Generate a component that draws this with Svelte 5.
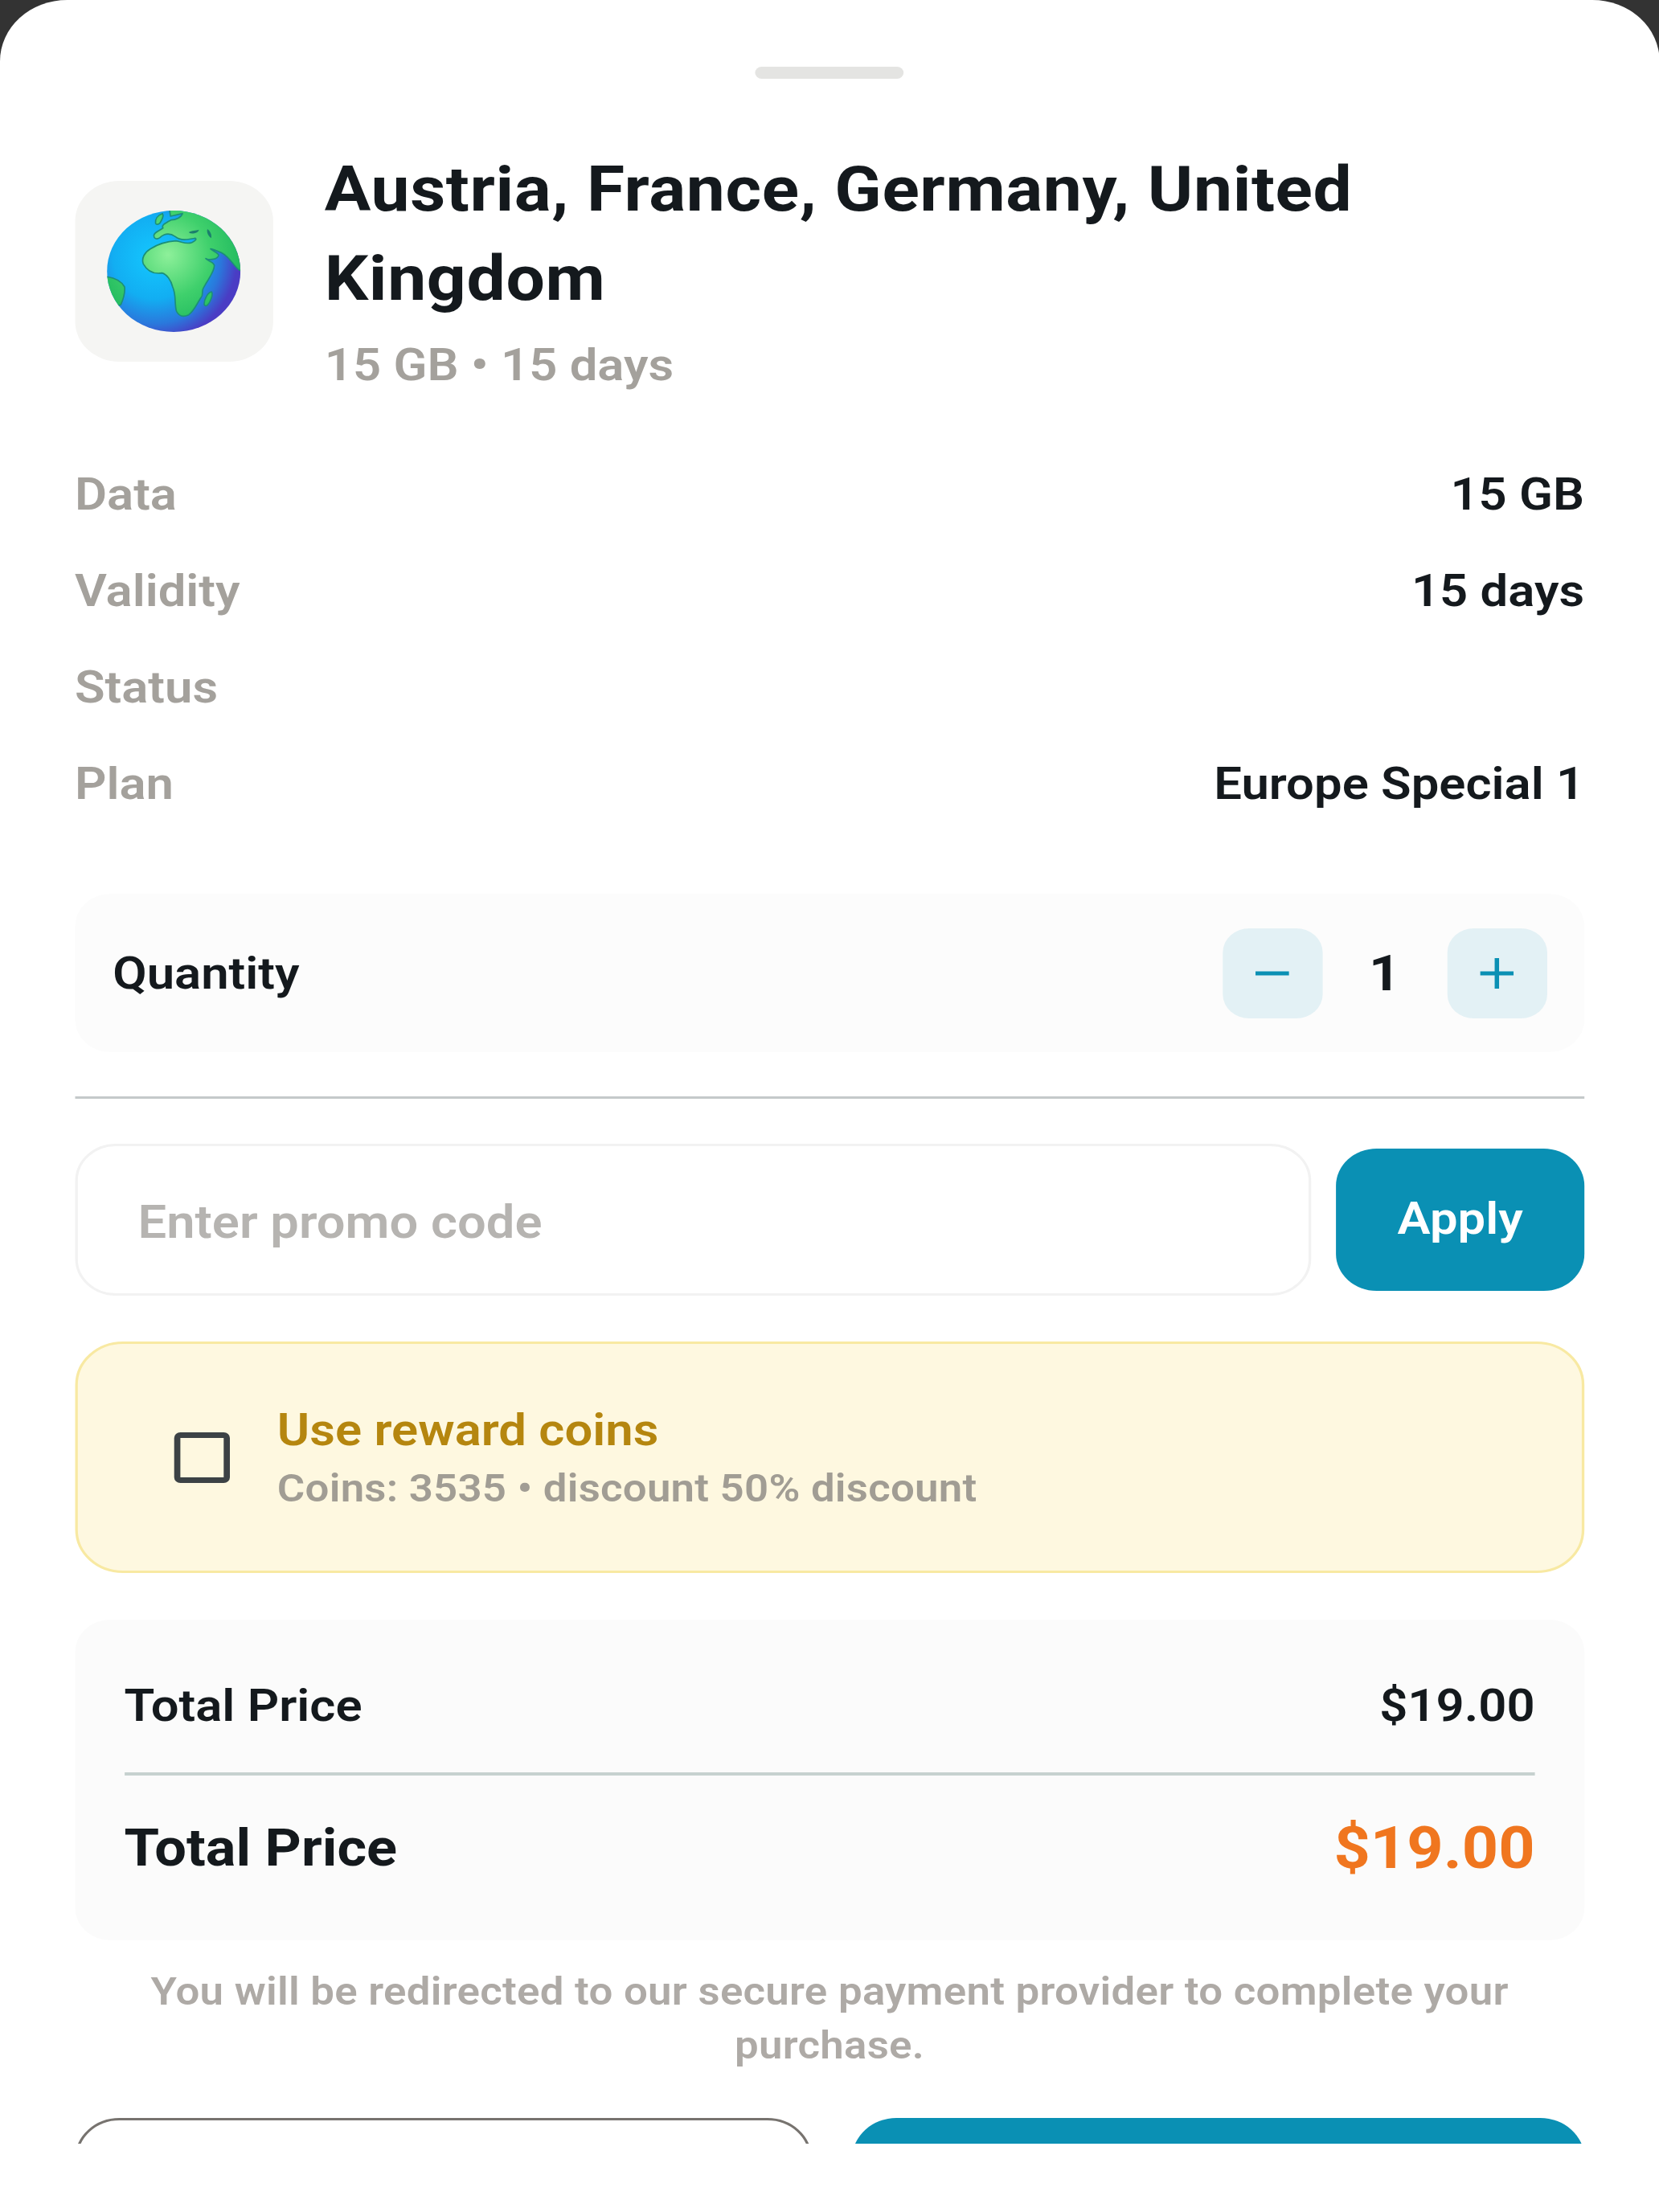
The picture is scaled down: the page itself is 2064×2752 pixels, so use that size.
<script>
  const rows = [
    { label: 'Data', value: '15 GB' },
    { label: 'Validity', value: '15 days' },
    { label: 'Status', value: '' },
    { label: 'Plan', value: 'Europe Special 1' }
  ];
  let quantity = $state(1);
  let useCoins = $state(false);
</script>

<div class="screen">
  <div class="sheet">
    <div class="handle"></div>

    <header class="head">
      <div class="flag">
        <svg class="globe" viewBox="222 215 500 453" preserveAspectRatio="none" aria-hidden="true">
          <defs>
            <radialGradient id="sea" gradientUnits="userSpaceOnUse" cx="400" cy="390" r="310">
              <stop offset="0" stop-color="#14c8ff" />
              <stop offset="0.5" stop-color="#12aef2" />
              <stop offset="0.8" stop-color="#2a78dc" />
              <stop offset="1" stop-color="#4a3cc4" />
            </radialGradient>
            <radialGradient id="land" gradientUnits="userSpaceOnUse" cx="450" cy="380" r="290">
              <stop offset="0" stop-color="#8ef09a" />
              <stop offset="0.55" stop-color="#3fd06c" />
              <stop offset="1" stop-color="#1fb85e" />
            </radialGradient>
            <clipPath id="ball"><ellipse cx="472" cy="441.500" rx="250" ry="226.500" /></clipPath>
          </defs>
          <ellipse cx="472" cy="441.500" rx="250" ry="226.500" fill="url(#sea)" />
          <g clip-path="url(#ball)" fill="url(#land)" stroke="#1c8f78" stroke-width="5" stroke-linejoin="round">
            <path d="M455 205 L740 205 L740 445 L716 436 C695 420 682 388 650 372 C636 366 622 360 610 358 C622 368 640 374 640 382 C636 396 610 402 592 394 C604 406 622 406 624 420 C624 446 600 470 582 506 C576 520 584 530 574 540 C560 560 548 590 528 604 C510 612 492 612 482 590 C474 560 482 530 468 500 C462 476 446 452 428 448 C402 452 376 446 358 414 C350 392 364 370 384 358 C410 342 440 330 480 328 C505 332 520 342 540 334 C552 328 560 322 552 318 C530 322 500 330 478 312 C460 300 440 298 420 316 C408 324 396 320 398 306 C402 294 420 290 432 280 C424 270 440 262 462 250 C480 250 500 240 505 226 L460 236 Z" />
            <path d="M404 262 C402 246 412 232 430 226 C436 236 428 250 420 262 C414 268 406 268 404 262 Z" />
            <path d="M205 460 C235 462 272 470 288 500 C290 520 282 548 274 566 L200 600 Z" />
            <path d="M586 564 C586 546 600 520 614 518 C620 530 610 556 598 568 C592 572 586 570 586 564 Z" />
          </g>
          <g fill="#1b7f6c">
            <path d="M528 296 C540 288 556 290 566 286 C566 296 550 302 534 300 Z" />
            <path d="M598 284 C608 290 616 306 612 318 C602 310 594 296 598 284 Z" />
          </g>
        </svg>
      </div>
      <div class="head-text">
        <h1>Austria, France, Germany, United Kingdom</h1>
        <p class="sub">15 GB • 15 days</p>
      </div>
    </header>

    <dl class="specs">
      {#each rows as row}
        <div class="spec">
          <dt>{row.label}</dt>
          <dd>{row.value}</dd>
        </div>
      {/each}
    </dl>

    <section class="quantity">
      <span class="qty-label">Quantity</span>
      <div class="stepper">
        <button class="step" aria-label="Decrease" onclick={() => (quantity = Math.max(1, quantity - 1))}>
          <svg viewBox="0 0 38 38" aria-hidden="true"><path d="M0 19H38" /></svg>
        </button>
        <span class="count">{quantity}</span>
        <button class="step" aria-label="Increase" onclick={() => quantity++}>
          <svg viewBox="0 0 38 38" aria-hidden="true"><path d="M0 19H38M19 0V38" /></svg>
        </button>
      </div>
    </section>

    <hr class="rule" />

    <div class="promo">
      <input type="text" placeholder="Enter promo code" />
      <button class="apply">Apply</button>
    </div>

    <label class="coins">
      <input class="native" type="checkbox" bind:checked={useCoins} />
      <span class="box"></span>
      <span class="coin-text">
        <span class="coin-title">Use reward coins</span>
        <span class="coin-sub">Coins: 3535 • discount 50% discount</span>
      </span>
    </label>

    <section class="totals">
      <div class="total-row">
        <span>Total Price</span>
        <span class="amount">$19.00</span>
      </div>
      <div class="total-line"></div>
      <div class="total-row grand">
        <span>Total Price</span>
        <span class="amount">$19.00</span>
      </div>
    </section>

    <p class="note">You will be redirected to our secure payment provider to complete your purchase.</p>

    <div class="actions">
      <button class="ghost" aria-label="Cancel"></button>
      <button class="solid" aria-label="Pay"></button>
    </div>
  </div>
</div>

<style>
  :global(body) {
    margin: 0;
    background: #ffffff;
  }

  .screen {
    width: 2064px;
    height: 2752px;
    background: #333333;
    font-family: Roboto, "Liberation Sans", sans-serif;
    color: #14191d;
    overflow: hidden;
  }

  /* The sheet is laid out narrower and widened as one piece, so glyphs and corners share the same proportions. */
  .sheet {
    box-sizing: border-box;
    width: 1877px;
    height: 2752px;
    padding: 83px 85px 0 84.5px;
    background: #ffffff;
    border-radius: 76px 76px 0 0;
    position: relative;
    overflow: hidden;
    transform: scaleX(1.1);
    transform-origin: left top;
  }

  .handle {
    width: 168px;
    height: 15px;
    margin: 0 auto;
    border-radius: 8px;
    background: #e4e4e2;
  }

  .head {
    display: flex;
    align-items: center;
    gap: 58.5px;
    margin-top: 81.5px;
  }

  .flag {
    flex: none;
    width: 224px;
    height: 225px;
    display: flex;
    align-items: center;
    justify-content: center;
    background: #f5f5f3;
    border-radius: 50px;
  }

  .globe {
    width: 151px;
    height: 151px;
  }

  .head-text {
    min-width: 0;
  }

  h1 {
    margin: 0;
    font-size: 78px;
    line-height: 111px;
    font-weight: 700;
    letter-spacing: 0.55px;
  }

  .sub {
    margin: 10px 0 0;
    font-size: 56px;
    line-height: 84px;
    font-weight: 600;
    color: #a4a19c;
  }

  .specs {
    margin: 59px 0 0;
    display: flex;
    flex-direction: column;
  }

  .spec {
    display: flex;
    justify-content: space-between;
    align-items: center;
    height: 120px;
  }

  dt {
    font-size: 56px;
    font-weight: 600;
    color: #a4a19c;
  }

  dd {
    margin: 0;
    font-size: 56px;
    font-weight: 600;
  }

  .quantity {
    margin-top: 77.5px;
    height: 197px;
    box-sizing: border-box;
    padding: 0 42.5px 0 43px;
    display: flex;
    align-items: center;
    justify-content: space-between;
    background: #fcfcfc;
    border-radius: 40px;
  }

  .qty-label {
    font-size: 56px;
    font-weight: 600;
  }

  .stepper {
    display: flex;
    align-items: center;
  }

  .step {
    width: 113px;
    height: 112px;
    padding: 0;
    border: 0;
    border-radius: 30px;
    background: #e3f1f5;
    display: flex;
    align-items: center;
    justify-content: center;
  }

  .step svg {
    width: 38px;
    height: 38px;
  }

  .step path {
    fill: none;
    stroke: #0a90b4;
    stroke-width: 5;
  }

  .count {
    width: 141px;
    text-align: center;
    font-size: 62px;
    font-weight: 700;
  }

  .rule {
    margin: 55px 0 0;
    height: 3px;
    border: 0;
    background: #c4c9ca;
  }

  .promo {
    margin-top: 56px;
    display: flex;
    align-items: center;
    gap: 28px;
  }

  .promo input {
    flex: 1;
    min-width: 0;
    height: 189px;
    box-sizing: border-box;
    padding: 5px 68.5px 0;
    border: 3px solid #f2f2f2;
    border-radius: 46px;
    outline: none;
    background: #ffffff;
    font: 600 57.5px Roboto, sans-serif;
  }

  .promo input::placeholder {
    color: #b6b4b1;
    opacity: 1;
  }

  .apply {
    width: 281px;
    height: 177px;
    padding: 0 0 3px;
    border: 0;
    border-radius: 46px;
    background: #0a90b4;
    color: #ffffff;
    font: 600 56px Roboto, sans-serif;
  }

  .coins {
    margin-top: 57px;
    height: 288px;
    box-sizing: border-box;
    padding-left: 109.5px;
    display: flex;
    align-items: center;
    border: 3px solid #f8e9a2;
    border-radius: 54px;
    background: #fef8e0;
  }

  .native {
    position: absolute;
    opacity: 0;
    pointer-events: none;
  }

  .box {
    flex: none;
    width: 63px;
    height: 63px;
    box-sizing: border-box;
    border: 7px solid #3c4245;
    border-radius: 7px;
  }

  .coin-text {
    margin-left: 53.5px;
    display: flex;
    flex-direction: column;
  }

  .coin-title {
    font-size: 56px;
    line-height: 70px;
    font-weight: 600;
    color: #b5860f;
  }

  .coin-sub {
    margin-top: 7px;
    font-size: 48px;
    line-height: 62px;
    font-weight: 600;
    letter-spacing: 0.2px;
    color: #a19d94;
  }

  .totals {
    margin-top: 58px;
    height: 399px;
    box-sizing: border-box;
    padding: 24px 56px 0;
    display: flex;
    flex-direction: column;
    background: #fbfbfb;
    border-radius: 40px;
  }

  .total-row {
    display: flex;
    justify-content: space-between;
    align-items: center;
    height: 166px;
    font-size: 56px;
    font-weight: 600;
  }

  .total-line {
    height: 4px;
    background: #c6d1cf;
  }

  .total-row.grand {
    height: 180px;
    font-size: 64px;
    font-weight: 700;
  }

  .grand .amount {
    font-size: 72px;
    color: #f0761f;
  }

  .note {
    margin: 30px 0 0;
    text-align: center;
    font-size: 48px;
    line-height: 67px;
    font-weight: 600;
    letter-spacing: 0.24px;
    color: #aeaaa6;
  }

  .actions {
    position: absolute;
    left: 84.5px;
    right: 85px;
    top: 2635px;
    height: 32px;
    display: flex;
    gap: 46px;
    overflow: hidden;
    align-items: flex-start;
  }

  .actions button {
    flex: 1;
    height: 160px;
    box-sizing: border-box;
    border-radius: 50px;
  }

  .ghost {
    border: 3px solid #77736f;
    background: #ffffff;
  }

  .solid {
    border: 0;
    background: #0a90b4;
  }
</style>
